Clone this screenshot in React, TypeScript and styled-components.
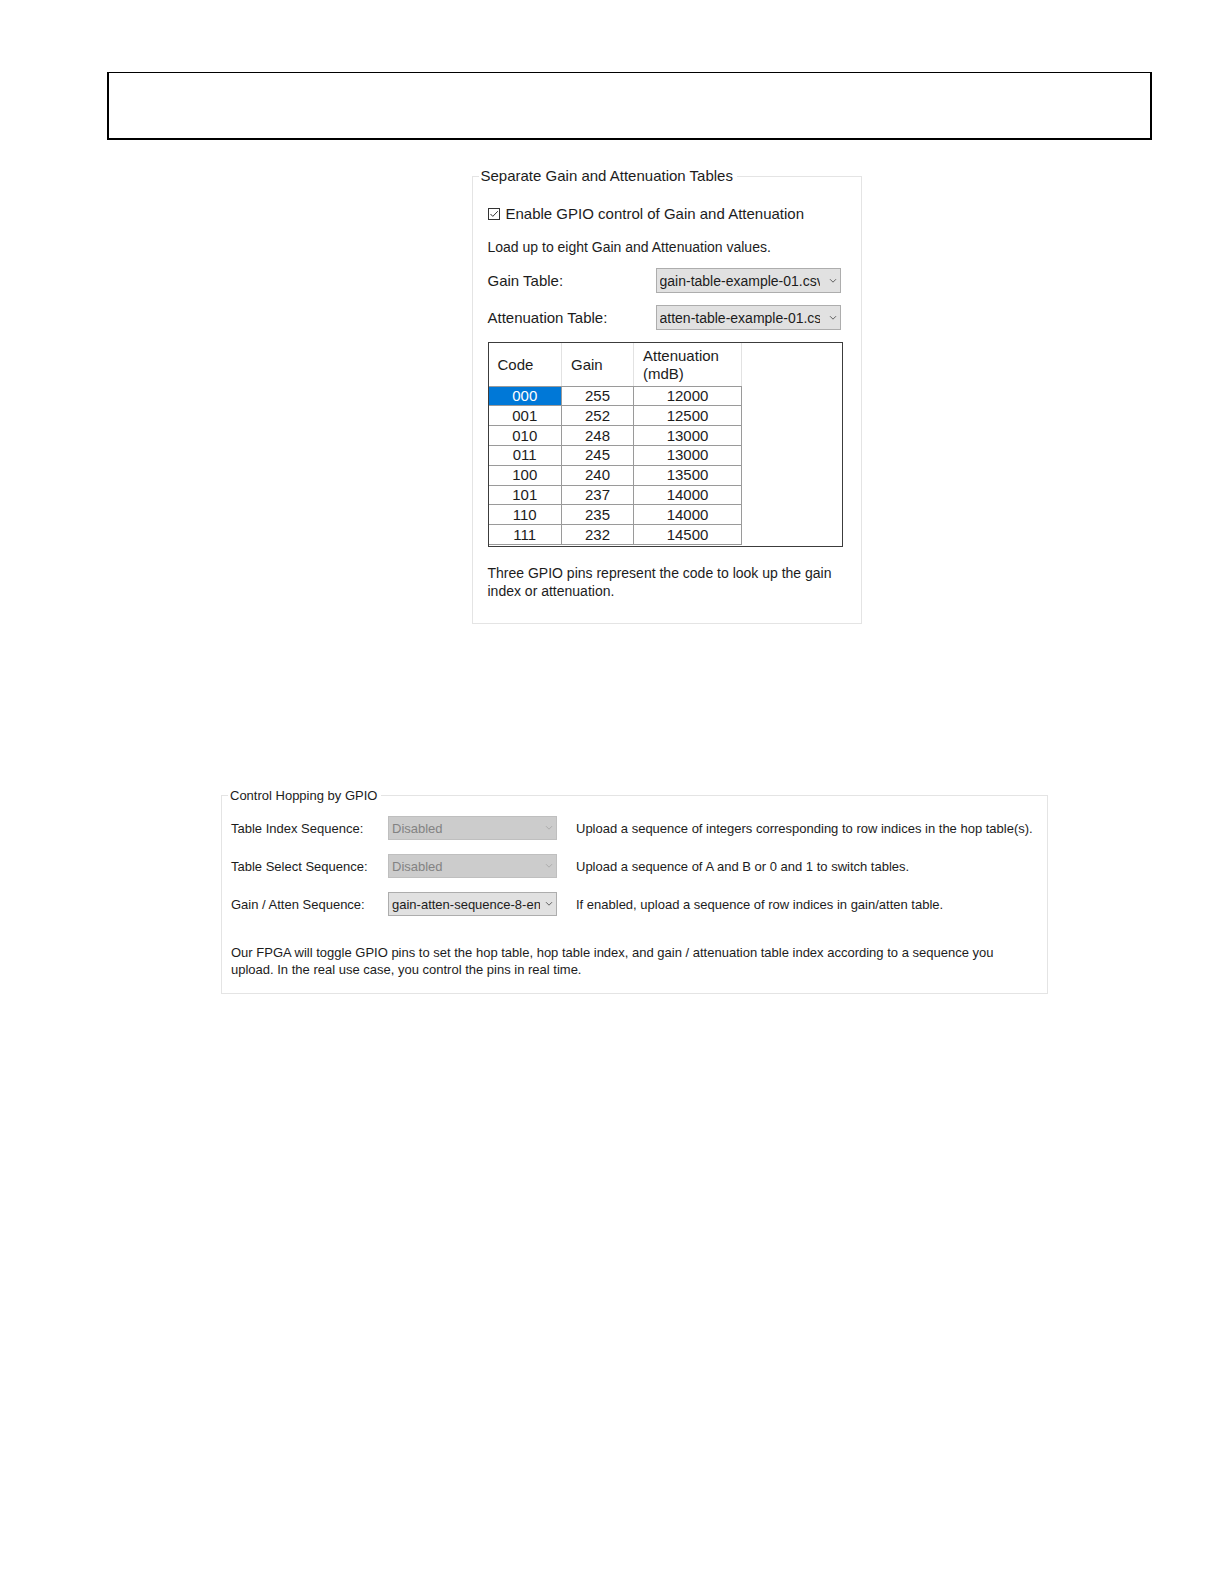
import React, { useId, useState } from "react";
import styled, { createGlobalStyle } from "styled-components";

const GlobalStyle = createGlobalStyle`
  *, *::before, *::after { box-sizing: border-box; }
  body {
    margin: 0;
    background: #ffffff;
    color: #1c1c1c;
    font-family: "Liberation Sans", Arial, Helvetica, sans-serif;
  }
`;

const Page = styled.main`
  display: flex;
  flex-direction: column;
  min-height: 100vh;
  padding: 72px 72px 72px 107px;
`;

const Banner = styled.header`
  height: 68px;
  border: 2px solid #000000;
  border-top-width: 1px;
`;

const Figure = styled.section<{ $top: number; $indent: number }>`
  display: flex;
  justify-content: center;
  margin-top: ${(p) => p.$top}px;
  padding-left: ${(p) => p.$indent}px;
`;

const Group = styled.fieldset<{ $width: number; $size: number; $line: number }>`
  display: flex;
  flex-direction: column;
  width: 100%;
  max-width: ${(p) => p.$width}px;
  min-width: 0;
  margin: 0;
  padding: 0;
  border: 1px solid #e4e4e4;
  font-size: ${(p) => p.$size}px;
  line-height: ${(p) => p.$line}px;
`;

const Legend = styled.legend`
  margin-left: 6px;
  padding: 0 4px 0 2px;
`;

const TablesBody = styled.div`
  display: flex;
  flex-direction: column;
  padding: 20px 18px 23px 15px;
`;

const CheckLabel = styled.label`
  display: flex;
  align-items: center;
  gap: 6px;
`;

const CheckHolder = styled.span`
  display: grid;
  width: 12px;
  height: 12px;

  > * { grid-area: 1 / 1; }
  svg { pointer-events: none; }
`;

const CheckBox = styled.input`
  appearance: none;
  width: 12px;
  height: 12px;
  margin: 0;
  border: 1px solid #333333;
  background: #ffffff;
`;

const Text = styled.p<{ $top: number; $size: number }>`
  margin: ${(p) => p.$top}px 0 0;
  font-size: ${(p) => p.$size}px;
`;

const FieldList = styled.div`
  display: flex;
  flex-direction: column;
  gap: 12px;
  margin: 12px 0;
`;

const FieldRow = styled.div`
  display: flex;
  align-items: center;
  justify-content: space-between;
  padding-right: 2px;
`;

const SelectBox = styled.div<{ $width: number; $height: number }>`
  position: relative;
  flex: none;
  width: ${(p) => p.$width}px;
  height: ${(p) => p.$height}px;
`;

const Select = styled.select<{ $size: number; $inset: number }>`
  appearance: none;
  display: block;
  width: 100%;
  height: 100%;
  margin: 0;
  padding: 0 ${(p) => p.$inset}px 0 3px;
  border: 1px solid #adadad;
  border-radius: 0;
  background: #e1e1e1;
  color: #1c1c1c;
  font-family: inherit;
  font-size: ${(p) => p.$size}px;

  &:disabled {
    border-color: #bfbfbf;
    background: #cccccc;
    color: #838383;
    opacity: 1;
  }
`;

const Arrow = styled.svg<{ $muted?: boolean }>`
  position: absolute;
  top: 50%;
  right: 4px;
  width: 8px;
  height: 6px;
  margin-top: -3px;
  fill: none;
  stroke: ${(p) => (p.$muted ? "#acacac" : "#606060")};
  pointer-events: none;
`;

const GridFrame = styled.div`
  height: 205px;
  border: 1px solid #3c3c3c;
`;

const GainGrid = styled.table`
  width: 253px;
  height: 202px;
  border-collapse: collapse;
  table-layout: fixed;
`;

const HeadCell = styled.th<{ $width: number }>`
  width: ${(p) => p.$width}px;
  height: 43px;
  padding: 2px 8px 0 9px;
  border-right: 1px solid #e2e2e2;
  border-bottom: 1px solid #9a9a9a;
  font-weight: 400;
  text-align: left;
`;

const Cell = styled.td<{ $selected?: boolean }>`
  padding: 0;
  border-right: 1px solid #9a9a9a;
  border-bottom: 1px solid #9a9a9a;
  background: ${(p) => (p.$selected ? "#0078d7" : "transparent")};
  color: ${(p) => (p.$selected ? "#ffffff" : "inherit")};
  text-align: center;
  cursor: default;
`;

const HoppingBody = styled.div`
  display: flex;
  flex-direction: column;
  padding: 12px 12px 15px 9px;
`;

const SequenceGrid = styled.div`
  display: grid;
  grid-template-columns: 138px 169px 1fr;
  column-gap: 19px;
  row-gap: 14px;
  align-items: center;
`;

const SequenceLabel = styled.label`
  white-space: nowrap;
`;

const rows = [
  ["000", "255", "12000"],
  ["001", "252", "12500"],
  ["010", "248", "13000"],
  ["011", "245", "13000"],
  ["100", "240", "13500"],
  ["101", "237", "14000"],
  ["110", "235", "14000"],
  ["111", "232", "14500"],
];

const sequences = [
  {
    label: "Table Index Sequence:",
    value: "Disabled",
    disabled: true,
    note: "Upload a sequence of integers corresponding to row indices in the hop table(s).",
  },
  {
    label: "Table Select Sequence:",
    value: "Disabled",
    disabled: true,
    note: "Upload a sequence of A and B or 0 and 1 to switch tables.",
  },
  {
    label: "Gain / Atten Sequence:",
    value: "gain-atten-sequence-8-entries.csv",
    disabled: false,
    note: "If enabled, upload a sequence of row indices in gain/atten table.",
  },
];

type DropDownProps = {
  id: string;
  value: string;
  width: number;
  height: number;
  size: number;
  inset: number;
  disabled?: boolean;
};

function DropDown({ id, value, width, height, size, inset, disabled }: DropDownProps) {
  return (
    <SelectBox $width={width} $height={height}>
      <Select id={id} $size={size} $inset={inset} disabled={disabled} defaultValue={value}>
        <option value={value}>{value}</option>
      </Select>
      <Arrow viewBox="0 0 8 6" $muted={disabled} aria-hidden="true">
        <path d="M1 1.2 4 4.2 7 1.2" />
      </Arrow>
    </SelectBox>
  );
}

function TableField({ label, value }: { label: string; value: string }) {
  const id = useId();
  return (
    <FieldRow>
      <label htmlFor={id}>{label}</label>
      <DropDown id={id} value={value} width={185} height={25} size={14} inset={20} />
    </FieldRow>
  );
}

function SequenceField({ label, value, disabled, note }: (typeof sequences)[number]) {
  const id = useId();
  return (
    <>
      <SequenceLabel htmlFor={id}>{label}</SequenceLabel>
      <DropDown id={id} value={value} width={169} height={24} size={13} inset={16} disabled={disabled} />
      <span>{note}</span>
    </>
  );
}

export default function App() {
  const [enabled, setEnabled] = useState(true);
  const [selected, setSelected] = useState("0-0");

  return (
    <>
      <GlobalStyle />
      <Page>
        <Banner />

        <Figure $top={27} $indent={74}>
          <Group $width={390} $size={15} $line={18}>
            <Legend>Separate Gain and Attenuation Tables</Legend>
            <TablesBody>
              <CheckLabel>
                <CheckHolder>
                  <CheckBox type="checkbox" checked={enabled} onChange={(e) => setEnabled(e.target.checked)} />
                  {enabled && (
                    <svg width="12" height="12" viewBox="0 0 12 12" fill="none" stroke="#333333" aria-hidden="true">
                      <path d="M2.5 6 4.8 8.4 9.8 3.2" />
                    </svg>
                  )}
                </CheckHolder>
                Enable GPIO control of Gain and Attenuation
              </CheckLabel>
              <Text $top={15} $size={14}>Load up to eight Gain and Attenuation values.</Text>
              <FieldList>
                <TableField label="Gain Table:" value="gain-table-example-01.csv" />
                <TableField label="Attenuation Table:" value="atten-table-example-01.csv" />
              </FieldList>
              <GridFrame>
                <GainGrid>
                  <thead>
                    <tr>
                      <HeadCell $width={73}>Code</HeadCell>
                      <HeadCell $width={72}>Gain</HeadCell>
                      <HeadCell $width={108}>Attenuation (mdB)</HeadCell>
                    </tr>
                  </thead>
                  <tbody>
                    {rows.map((row, r) => (
                      <tr key={row[0]}>
                        {row.map((value, c) => (
                          <Cell key={c} $selected={selected === `${r}-${c}`} onClick={() => setSelected(`${r}-${c}`)}>
                            {value}
                          </Cell>
                        ))}
                      </tr>
                    ))}
                  </tbody>
                </GainGrid>
              </GridFrame>
              <Text $top={17} $size={14}>
                Three GPIO pins represent the code to look up the gain index or attenuation.
              </Text>
            </TablesBody>
          </Group>
        </Figure>

        <Figure $top={163} $indent={10}>
          <Group $width={827} $size={13} $line={17}>
            <Legend>Control Hopping by GPIO</Legend>
            <HoppingBody>
              <SequenceGrid>
                {sequences.map((s) => (
                  <SequenceField key={s.label} {...s} />
                ))}
              </SequenceGrid>
              <Text $top={28} $size={13}>
                Our FPGA will toggle GPIO pins to set the hop table, hop table index, and gain / attenuation table index
                according to a sequence you upload. In the real use case, you control the pins in real time.
              </Text>
            </HoppingBody>
          </Group>
        </Figure>
      </Page>
    </>
  );
}
